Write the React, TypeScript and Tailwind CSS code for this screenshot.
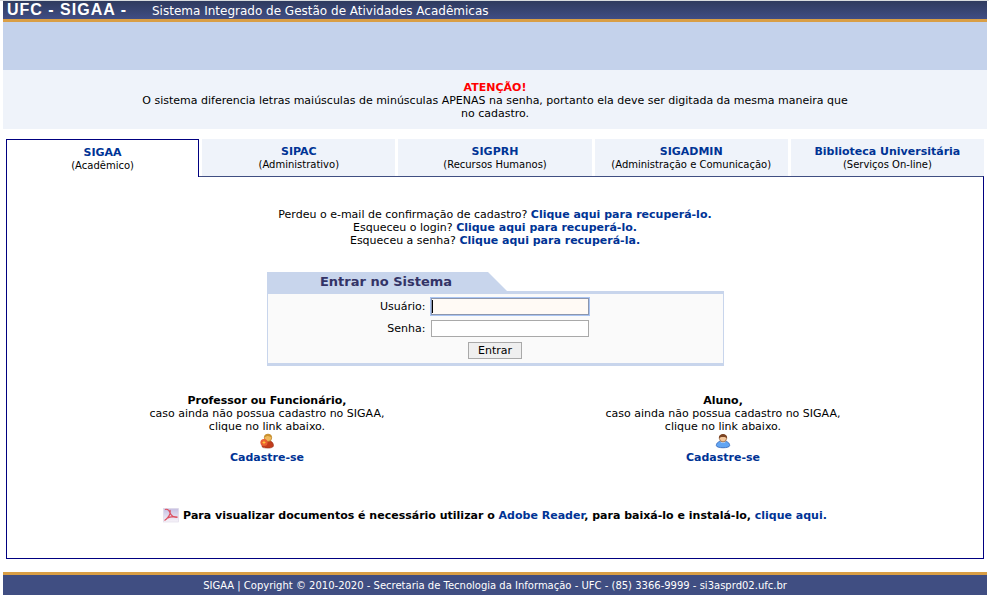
import type { ReactNode } from "react";

const tabs = [
  { name: "SIGAA", area: "(Acadêmico)" },
  { name: "SIPAC", area: "(Administrativo)" },
  { name: "SIGPRH", area: "(Recursos Humanos)" },
  { name: "SIGADMIN", area: "(Administração e Comunicação)" },
  { name: "Biblioteca Universitária", area: "(Serviços On-line)" },
];

const recoverLinks = [
  { question: "Perdeu o e-mail de confirmação de cadastro?", link: "Clique aqui para recuperá-lo." },
  { question: "Esqueceu o login?", link: "Clique aqui para recuperá-lo." },
  { question: "Esqueceu a senha?", link: "Clique aqui para recuperá-la." },
];

function Link({ children }: { children: ReactNode }) {
  return (
    <a href="#" className="font-bold text-[#003395]">
      {children}
    </a>
  );
}

function TeacherIcon() {
  return (
    <svg width="16" height="16" viewBox="0 0 16 16" aria-hidden="true">
      <path d="M3 13c0-3.500 3-5.500 6-5.500 3.500 0 5.500 2.500 5.500 5 0 2.500-5 2.800-7 2.500S3 15 3 13z" fill="#c23c1c" stroke="#93301a" strokeWidth=".6" />
      <circle cx="9" cy="4.800" r="3.700" fill="#f0b95c" stroke="#b07a24" strokeWidth=".7" />
      <path d="M5.200 4.500C5.200.2 12.800.2 12.800 4.500 11 4 10 2.900 8.500 3 7.300 3.200 6.500 4 5.200 4.500z" fill="#c9922f" />
      <circle cx="5" cy="9.500" r="3.600" fill="#ea5f33" />
      <path d="M5 7.300l.6 1.600 1.600.6-1.600.6L5 11.700l-.6-1.600-1.600-.6 1.600-.6z" fill="#ffc93c" />
    </svg>
  );
}

function StudentIcon() {
  return (
    <svg width="16" height="16" viewBox="0 0 16 16" aria-hidden="true">
      <path d="M1.300 12.500c.2-3 2.700-4.500 6.700-4.500s6.500 1.500 6.700 4.500c0 3-13.400 3-13.400 0z" fill="#62a5f3" stroke="#2b5fb5" strokeWidth=".8" />
      <path d="M5 8.500c1 1.800 5 1.800 6 0z" fill="#cfe5ff" />
      <circle cx="8" cy="5.300" r="3.600" fill="#f3c79c" stroke="#8a5a35" strokeWidth=".7" />
      <path d="M3.900 5.500C3-.4 13-.4 12.100 5.500 11 4.200 10 3.900 8 3.900S5 4.200 3.900 5.500z" fill="#7c4524" />
    </svg>
  );
}

function PdfIcon() {
  return (
    <svg width="16" height="16" viewBox="0 0 16 16" aria-hidden="true">
      <defs>
        <linearGradient id="pdf" x1="0" y1="0" x2="0" y2="1">
          <stop offset="0" stopColor="#c5bfe2" />
          <stop offset="1" stopColor="#f8f4f9" />
        </linearGradient>
      </defs>
      <rect x=".5" y="1.500" width="15" height="13.500" fill="url(#pdf)" stroke="#ddd5e6" strokeWidth=".6" />
      <path d="M2 2.500c2.500-.8 4 .3 5 3.200 1 2.800 3 4.600 7.500 4.800M7 3c1 3.500-1.500 8-5.500 10.500M3.500 11.500c3-1.800 6.500-2.300 11-1.500" fill="none" stroke="#dc4f60" strokeWidth="1.100" />
    </svg>
  );
}

function RegisterBlock({ title, icon }: { title: string; icon: ReactNode }) {
  return (
    <div className="flex flex-1 flex-col items-center">
      <strong>{title}</strong>
      <span>caso ainda não possua cadastro no SIGAA,</span>
      <span>clique no link abaixo.</span>
      {icon}
      <div className="mt-0.5">
        <Link>Cadastre-se</Link>
      </div>
    </div>
  );
}

function LoginForm() {
  return (
    <form className="mx-auto mt-[25px] w-full max-w-[457px]">
      <div className="flex h-[19px]">
        <h2 className="w-[221px] bg-[#c8d5ec] pt-0.5 pl-[18px] text-center text-[13px] leading-4 font-bold text-[#333366]">
          Entrar no Sistema
        </h2>
        <svg width="19" height="19" viewBox="0 0 19 19" aria-hidden="true">
          <path d="M0 0L19 19H0z" fill="#c8d5ec" />
        </svg>
      </div>
      <div className="flex flex-col gap-[5px] border-x border-y-3 border-[#c8d5ec] bg-[#fafafa] py-1">
        <div className="flex items-center">
          <label htmlFor="user" className="w-[158px] text-right">
            Usuário:
          </label>
          <div className="relative ml-[5px] h-[17px] w-[158px]">
            <input
              id="user"
              type="text"
              autoFocus
              className="block h-[17px] w-full border border-[#8c96ad] bg-[#fffaf5] px-px caret-transparent outline outline-[#a9c4f2]"
            />
            <span className="absolute top-0.5 left-px h-[13px] w-px bg-black" />
          </div>
        </div>
        <div className="flex items-center">
          <label htmlFor="password" className="w-[158px] text-right">
            Senha:
          </label>
          <input
            id="password"
            type="password"
            className="ml-[5px] h-[17px] w-[158px] border border-[#a9a9a9] bg-white px-px"
          />
        </div>
        <button
          type="button"
          className="mx-auto h-[17px] w-[54px] border border-[#a9a9a9] bg-[#efefef] leading-4"
        >
          Entrar
        </button>
      </div>
    </form>
  );
}

export default function App() {
  return (
    <div className="border-t border-[#d8dcdf] bg-white pr-0.5 pb-1 pl-[3px] font-['DejaVu_Sans',Verdana,sans-serif] text-[11px] leading-[13px] text-black">
      <header>
        <div className="flex h-[21px] items-center border-b-3 border-[#d99e45] bg-linear-to-b from-[#2f3b5f] to-[#404d84] pl-1 text-white">
          <h1 className="w-[145px] font-['Liberation_Sans',Arial,sans-serif] text-[16px] leading-4 font-bold tracking-[1px]">
            UFC - SIGAA -
          </h1>
          <span className="pt-0.5 text-[12px]">Sistema Integrado de Gestão de Atividades Acadêmicas</span>
        </div>
        <div className="h-12 bg-[#c4d2eb]" />
      </header>

      <div className="bg-[#eff3fa] pt-[11px] pb-[9px] text-center">
        <strong className="text-[#ff0000]">ATENÇÃO!</strong>
        <p className="mx-auto max-w-[720px]">
          O sistema diferencia letras maiúsculas de minúsculas APENAS na senha, portanto ela deve ser
          digitada da mesma maneira que no cadastro.
        </p>
      </div>

      <main className="mt-2.5 px-[3px]">
        <nav className="grid grid-cols-5 gap-[3px] text-center">
          {tabs.map((tab, i) => (
            <a
              key={tab.name}
              href="#"
              className={
                i === 0
                  ? "relative -mb-px h-[38px] border border-b-0 border-[#000080] bg-white pt-1.5"
                  : "h-[37px] bg-[#eff3fa] pt-1.5"
              }
            >
              <span className="block font-bold text-[#003395]">{tab.name}</span>
              <span className="block text-[10px]">{tab.area}</span>
            </a>
          ))}
        </nav>

        <section className="border border-t-[#404e82] border-[#000080] px-8 pt-[31px] pb-[35px]">
          <div className="text-center">
            {recoverLinks.map((item) => (
              <p key={item.question}>
                {item.question} <Link>{item.link}</Link>
              </p>
            ))}
          </div>

          <LoginForm />

          <div className="mt-7 flex">
            <RegisterBlock title="Professor ou Funcionário," icon={<TeacherIcon />} />
            <RegisterBlock title="Aluno," icon={<StudentIcon />} />
          </div>

          <div className="mt-[43px] flex items-center justify-center gap-1 font-bold">
            <PdfIcon />
            <p>
              Para visualizar documentos é necessário utilizar o <Link>Adobe Reader</Link>, para
              baixá-lo e instalá-lo, <Link>clique aqui.</Link>
            </p>
          </div>
        </section>
      </main>

      <footer className="mt-[13px] border-t-3 border-[#d99e45] bg-[#404e82] pt-[5px] pb-[3px] text-center text-[10px] leading-3 text-white">
        SIGAA | Copyright © 2010-2020 - Secretaria de Tecnologia da Informação - UFC - (85) 3366-9999 -
        si3asprd02.ufc.br
      </footer>
    </div>
  );
}
